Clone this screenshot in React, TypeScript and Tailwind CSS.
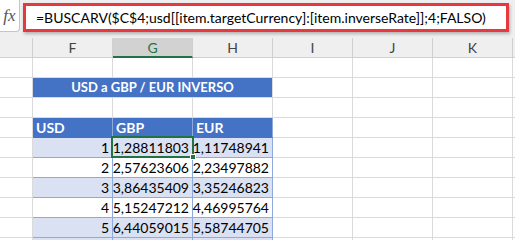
import React from "react";

const font = { fontFamily: 'Lato, "Liberation Sans", Arial, sans-serif' };

const cols = ["E", "F", "G", "H", "I", "J", "K", ""];
const widths = [33, 80, 80, 80, 80, 80, 80, 40];

const data = [
  ["1", "1,28811803", "1,11748941"],
  ["2", "2,57623606", "2,23497882"],
  ["3", "3,86435409", "3,35246823"],
  ["4", "5,15247212", "4,46995764"],
  ["5", "6,44059015", "5,58744705"],
];

function EmptyCell({ w }: { w: number }) {
  return <div className="h-full shrink-0 border-r border-b border-[#dadada] bg-white" style={{ width: w }} />;
}

function Tail({ from }: { from: number }) {
  return (
    <>
      {widths.slice(from).map((w, i) => (
        <EmptyCell key={i} w={w} />
      ))}
    </>
  );
}

export default function App() {
  return (
    <div className="w-[515px] h-[240px] overflow-hidden bg-white relative" style={font}>
      {/* formula bar */}
      <div className="h-[38px] bg-[#efefef] relative">
        <div className="absolute left-0 top-0 w-[20px] h-[32px] bg-white border-r border-b border-[#c6c6c6] rounded-br-[4px] flex items-center justify-center">
          <span className="text-[17px] italic text-[#555]" style={{ fontFamily: '"Liberation Serif", serif' }}>fx</span>
        </div>
        <div className="absolute left-[23px] top-[3px] w-[486px] h-[29px] bg-white border-[3px] border-[#e8383f] shadow-[1px_2px_3px_rgba(0,0,0,0.25)] flex items-center pl-[10px]">
          <span className="text-[14px] text-black whitespace-nowrap">=BUSCARV($C$4;usd[[item.targetCurrency]:[item.inverseRate]];4;FALSO)</span>
        </div>
      </div>
      {/* column headers */}
      <div className="flex h-[20px]">
        {cols.map((c, i) => (
          <div
            key={i}
            className={
              "h-full shrink-0 border-r border-[#d0d0d0] flex items-center justify-center text-[14px] " +
              (c === "G"
                ? "bg-[#d2d2d2] border-b-2 border-b-[#217346] text-[#217346]"
                : "bg-[#efefef] border-b border-b-[#d0d0d0] text-[#444]")
            }
            style={{ width: widths[i] }}
          >
            {i === 0 ? "" : c}
          </div>
        ))}
      </div>
      {/* row 1 empty */}
      <div className="flex h-[20px]">
        <Tail from={0} />
      </div>
      {/* title row */}
      <div className="flex h-[20px]">
        <EmptyCell w={33} />
        <div className="h-full w-[240px] shrink-0 bg-[#4472c4] border-r border-b border-[#dadada] flex items-center justify-center text-white font-bold text-[13px]">
          USD a GBP / EUR INVERSO
        </div>
        <Tail from={4} />
      </div>
      {/* empty */}
      <div className="flex h-[20px]">
        <Tail from={0} />
      </div>
      {/* table header */}
      <div className="flex h-[20px]">
        <EmptyCell w={33} />
        {["USD", "GBP", "EUR"].map((h) => (
          <div key={h} className="h-full w-[80px] shrink-0 bg-[#4472c4] border-r border-[#8ea9db] border-b border-b-[#4472c4] flex items-center pl-[3px] text-white font-bold text-[14px]">
            {h}
          </div>
        ))}
        <Tail from={4} />
      </div>
      {data.map((r, ri) => (
        <div key={ri} className="flex h-[20px]">
          <EmptyCell w={33} />
          {r.map((v, ci) => (
            <div
              key={ci}
              className={
                "h-full w-[80px] shrink-0 border-r border-b border-[#8ea9db] flex items-center justify-end pr-[3px] text-[14px] text-black " +
                (ri % 2 === 0 ? "bg-[#d9e1f2]" : "bg-white")
              }
            >
              {v}
            </div>
          ))}
          <Tail from={4} />
        </div>
      ))}
      <div className="flex h-[20px]">
        <EmptyCell w={33} />
        <div className="h-full w-[80px] shrink-0 border-r border-[#8ea9db] bg-[#d9e1f2]" />
        <div className="h-full w-[80px] shrink-0 border-r border-[#8ea9db] bg-[#d9e1f2]" />
        <div className="h-full w-[80px] shrink-0 border-r border-[#8ea9db] bg-[#d9e1f2]" />
        <Tail from={4} />
      </div>
      {/* selection */}
      <div className="absolute left-[111px] top-[136px] w-[83px] h-[22px] border-2 border-[#217346] pointer-events-none">
        <div className="absolute right-[-4px] bottom-[-4px] w-[6px] h-[6px] bg-[#217346] border border-white" />
      </div>
    </div>
  );
}
